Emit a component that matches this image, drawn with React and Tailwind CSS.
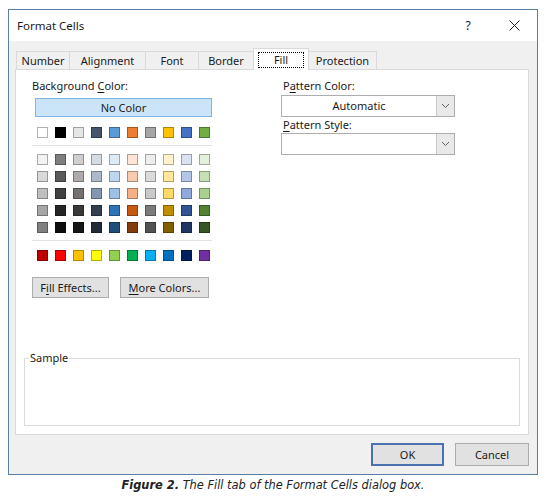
import React from 'react';

const THEME = ['#FFFFFF', '#000000', '#E7E6E6', '#44546A', '#5B9BD5', '#ED7D31', '#A5A5A5', '#FFC000', '#4472C4', '#70AD47'];

const SHADES = [
  ['#F2F2F2', '#7F7F7F', '#D0CECE', '#D6DCE4', '#DDEBF7', '#FCE4D6', '#EDEDED', '#FFF2CC', '#D9E1F2', '#E2EFDA'],
  ['#D9D9D9', '#595959', '#AEAAAA', '#ADB9CA', '#BDD7EE', '#F8CBAD', '#DBDBDB', '#FFE699', '#B4C6E7', '#C6E0B4'],
  ['#BFBFBF', '#404040', '#757171', '#8497B0', '#9BC2E6', '#F4B084', '#C9C9C9', '#FFD966', '#8EA9DB', '#A9D08E'],
  ['#A6A6A6', '#262626', '#3B3838', '#333F4F', '#2F75B5', '#C65911', '#7B7B7B', '#BF8F00', '#305496', '#548235'],
  ['#808080', '#0D0D0D', '#161616', '#222B35', '#1F4E78', '#833C0C', '#525252', '#806000', '#203764', '#375623'],
];

const STANDARD = ['#C00000', '#FF0000', '#FFC000', '#FFFF00', '#92D050', '#00B050', '#00B0F0', '#0070C0', '#002060', '#7030A0'];

const TABS = [
  { label: 'Number', w: 'w-[54px]' },
  { label: 'Alignment', w: 'w-[77px]' },
  { label: 'Font', w: 'w-[54px]' },
  { label: 'Border', w: 'w-[56px]' },
  { label: 'Fill', w: 'w-[56px]', active: true },
  { label: 'Protection', w: 'w-[69px]' },
];

const SwatchRow = ({ colors }) => (
  <div className="flex gap-[7px] pl-[5px]">
    {colors.map((c, i) => (
      <div key={i} className="w-[11px] h-[11px] border border-black/30" style={{ backgroundColor: c }} />
    ))}
  </div>
);

const Chevron = () => (
  <svg width="9" height="6" viewBox="0 0 9 6" fill="none">
    <path d="M1 1l3.5 3.5L8 1" stroke="#606060" strokeWidth="1" />
  </svg>
);

const Dropdown = ({ value }) => (
  <div className="flex h-[22px] w-[174px] border border-[#adadad] bg-white">
    <div className="flex-1 flex items-center justify-center text-[#1a1a1a]">{value}</div>
    <div className="w-[18px] flex items-center justify-center bg-[#e9e9e9] border-l border-[#c9c9c9]">
      <Chevron />
    </div>
  </div>
);

const Key = ({ children }) => <span className="underline underline-offset-[2px]">{children}</span>;

const Button = ({ children, className = '' }) => (
  <button className={`h-[21px] bg-[#e1e1e1] border border-[#adadad] text-[#1a1a1a] ${className}`}>{children}</button>
);

export default function App() {
  return (
    <div className="w-[555px] h-[499px] bg-white pt-[9px] pl-[8px] font-['Noto_Sans',sans-serif] text-[11px] leading-[16px] text-[#1a1a1a]">
      <div className="w-[530px] border border-[#5b7ea6] bg-[#f0f0f0]">
        {/* Title bar */}
        <div className="h-[31px] bg-white flex items-center">
          <span className="pl-[8px] flex-1 text-[11.5px]">Format Cells</span>
          <div className="w-[46px] h-full flex items-center justify-center text-[12px]">?</div>
          <div className="w-[46px] h-full flex items-center justify-center">
            <svg width="11" height="11" viewBox="0 0 11 11">
              <path d="M0.5 0.5l10 10M10.5 0.5l-10 10" stroke="#222" strokeWidth="1" />
            </svg>
          </div>
        </div>

        <div className="pt-[7px] px-[6px] pr-[8px]">
          {/* Tabs */}
          <div className="flex items-end h-[21px] pl-[1px] relative z-10">
            {TABS.map((t, i) => (
              <div
                key={t.label}
                className={
                  t.active
                    ? `${t.w} h-[22px] -mb-px -ml-px bg-white border border-b-0 border-[#d9d9d9] flex items-center justify-center`
                    : `${t.w} h-[18px] -ml-px bg-[#f0f0f0] border border-b-0 border-[#d9d9d9] flex items-center justify-center ${i === 0 ? 'ml-0' : ''}`
                }
              >
                {t.active ? (
                  <span className="w-[46px] h-[16px] border border-dotted border-black flex items-center justify-center">{t.label}</span>
                ) : (
                  t.label
                )}
              </div>
            ))}
          </div>

          {/* Panel */}
          <div className="h-[366px] bg-white border border-[#d9d9d9] flex flex-col pt-[8px] pb-[8px]">
            <div className="flex pl-[16px]">
              {/* Left column */}
              <div className="w-[180px] flex flex-col">
                <div>
                  Background <Key>C</Key>olor:
                </div>
                <div className="mt-[4px] ml-[3px] w-[177px] h-[19px] bg-[#cce4f7] border border-[#7eb4ea] flex items-center justify-center">
                  No Color
                </div>
                <div className="mt-[10px]">
                  <SwatchRow colors={THEME} />
                </div>
                <div className="mt-[7px] h-px bg-[#e3e3e3]" />
                <div className="mt-[8px] flex flex-col gap-[6px]">
                  {SHADES.map((row, i) => (
                    <SwatchRow key={i} colors={row} />
                  ))}
                </div>
                <div className="mt-[7px] h-px bg-[#e3e3e3]" />
                <div className="mt-[9px]">
                  <SwatchRow colors={STANDARD} />
                </div>
                <div className="mt-[16px] flex gap-[11px]">
                  <Button className="w-[77px]">
                    F<Key>i</Key>ll Effects...
                  </Button>
                  <Button className="w-[89px]">
                    <Key>M</Key>ore Colors...
                  </Button>
                </div>
              </div>

              {/* Right column */}
              <div className="ml-[69px] flex flex-col">
                <div className="pl-[2px]">
                  P<Key>a</Key>ttern Color:
                </div>
                <div className="mt-[1px]">
                  <Dropdown value="Automatic" />
                </div>
                <div className="pl-[2px]">
                  <Key>P</Key>attern Style:
                </div>
                <Dropdown value="" />
              </div>
            </div>

            <div className="flex-1" />

            <fieldset className="mx-[8px] h-[76px] border border-[#dcdcdc]">
              <legend className="ml-[4px] px-[1px]">Sample</legend>
            </fieldset>
          </div>

          {/* Buttons */}
          <div className="flex justify-end gap-[11px] pt-[8px] pb-[8px]">
            <button className="w-[73px] h-[23px] bg-[#e1e1e1] border-2 border-[#4a72ae]">OK</button>
            <button className="w-[74px] h-[23px] bg-[#e1e1e1] border border-[#adadad]">Cancel</button>
          </div>
        </div>
      </div>

      <div className="w-[530px] mt-[3px] text-center font-['DejaVu_Sans',sans-serif] italic text-[11.4px] leading-[14px] text-[#222]">
        <span className="font-bold">Figure 2.</span> The Fill tab of the Format Cells dialog box.
      </div>
    </div>
  );
}
